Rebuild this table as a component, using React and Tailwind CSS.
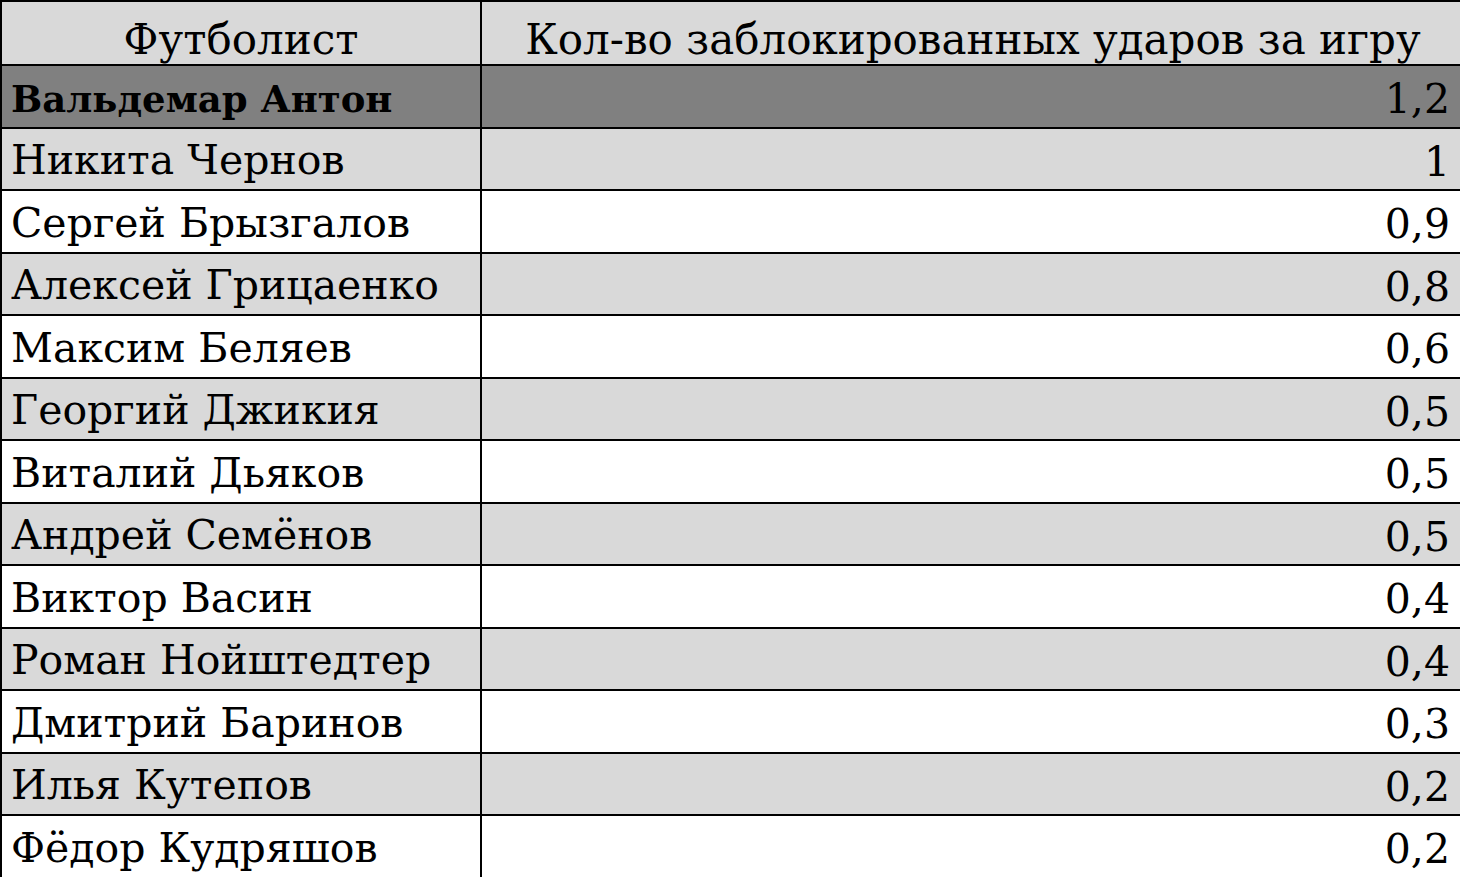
const rows = [
  ['Вальдемар Антон', '1,2'],
  ['Никита Чернов', '1'],
  ['Сергей Брызгалов', '0,9'],
  ['Алексей Грицаенко', '0,8'],
  ['Максим Беляев', '0,6'],
  ['Георгий Джикия', '0,5'],
  ['Виталий Дьяков', '0,5'],
  ['Андрей Семёнов', '0,5'],
  ['Виктор Васин', '0,4'],
  ['Роман Нойштедтер', '0,4'],
  ['Дмитрий Баринов', '0,3'],
  ['Илья Кутепов', '0,2'],
  ['Фёдор Кудряшов', '0,2'],
];

function rowBg(i) {
  if (i === 0) return 'bg-[#808080]';
  return i % 2 === 1 ? 'bg-[#d9d9d9]' : 'bg-white';
}

export default function App() {
  return (
    <div className="w-[1460px] h-[877px] overflow-hidden bg-white text-black font-['DejaVu_Serif',serif]">
      <div className="border-t-2 border-l-2 border-black w-[1462px]">
        <div className="grid grid-cols-[480px_1fr] h-[64px] bg-[#d9d9d9] border-b-2 border-black text-[42px]">
          <div className="flex items-center justify-center pt-[6px] border-r-2 border-black">Футболист</div>
          <div className="flex items-center justify-center pt-[6px] pl-[4px] border-r-2 border-black">Кол-во заблокированных ударов за игру</div>
        </div>
        {rows.map(([name, val], i) => (
          <div key={name} className={`grid grid-cols-[480px_1fr] h-[62.5px] border-b-2 border-black text-[41px] ${rowBg(i)}`}>
            <div className={`flex items-center pl-[9px] border-r-2 border-black whitespace-nowrap ${i === 0 ? 'font-bold text-[37px] pt-[3px]' : ''}`}>{name}</div>
            <div className="flex items-center justify-end pt-[3px] pr-[10px] border-r-2 border-black">{val}</div>
          </div>
        ))}
      </div>
    </div>
  );
}
